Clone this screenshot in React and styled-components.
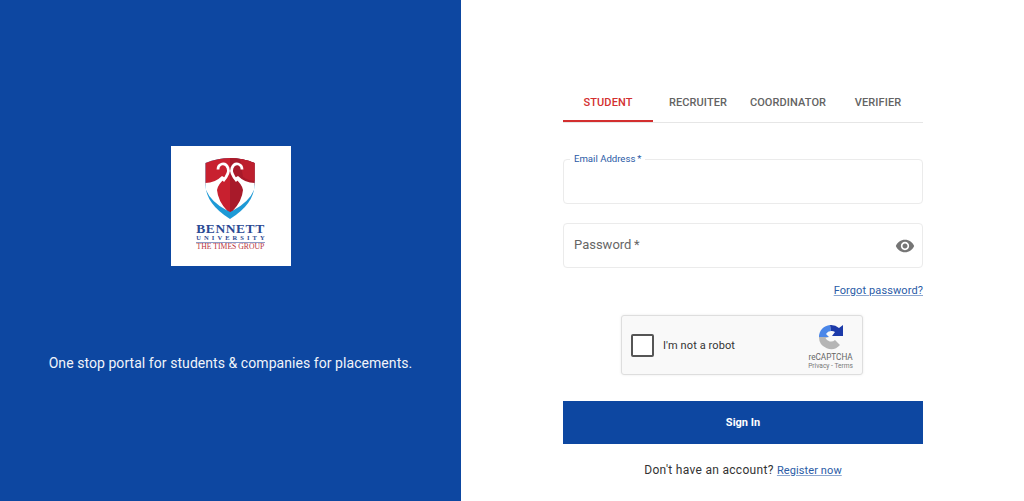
import React from "react";
import styled, { createGlobalStyle } from "styled-components";

const Global = createGlobalStyle`
  html, body { margin: 0; padding: 0; background: #fff; }
  body { font-family: Roboto, "Liberation Sans", sans-serif; }
  * { box-sizing: border-box; }
`;
const Page = styled.div`
  display: flex;
  width: 1024px;
  height: 501px;
  overflow: hidden;
`;
const Brand = styled.aside`
  width: 461px;
  background: #0d47a1;
  display: flex;
  flex-direction: column;
  align-items: center;
  padding-top: 146px;
`;
const LogoCard = styled.div`
  width: 120px;
  height: 120px;
  background: #fff;
  display: flex;
  flex-direction: column;
  align-items: center;
  padding-top: 11px;
`;
const Crest = styled.svg`
  width: 50px;
  height: 63px;
  margin-left: -2px;
  display: block;
`;
const LogoTitle = styled.div`
  font-family: "Liberation Serif", serif;
  font-weight: 700;
  font-size: 13.5px;
  line-height: 12px;
  letter-spacing: 0.55px;
  color: #2b4a94;
  margin-top: 3px;
  white-space: nowrap;
`;
const LogoSub = styled.div`
  font-family: "Liberation Serif", serif;
  font-weight: 700;
  font-size: 6.5px;
  line-height: 6px;
  letter-spacing: 3.05px;
  margin-right: -3px;
  color: #2b4a94;
  white-space: nowrap;
`;
const LogoRule = styled.div`
  width: 69px;
  height: 1px;
  background: #8d9cc6;
  margin-top: 1px;
`;
const LogoGroup = styled.div`
  font-family: "Liberation Serif", serif;
  font-weight: 400;
  font-size: 7.7px;
  line-height: 8px;
  color: #b8323c;
  white-space: nowrap;
`;
const Tagline = styled.p`
  margin: 88px 0 0;
  font-size: 14px;
  line-height: 18px;
  letter-spacing: 0.06px;
  color: #f1f4fa;
  white-space: nowrap;
`;
const Main = styled.main`
  flex: 1;
  display: flex;
  justify-content: center;
  padding-top: 84px;
  padding-left: 1px;
`;
const Column = styled.div`
  width: 360px;
  display: flex;
  flex-direction: column;
`;
const Tabs = styled.div`
  display: grid;
  grid-template-columns: repeat(4, 90px);
  height: 39px;
  border-bottom: 1px solid #e6e6e6;
`;
const Tab = styled.div`
  display: flex;
  align-items: center;
  justify-content: center;
  height: 38px;
  font-size: 11px;
  font-weight: 500;
  letter-spacing: 0.1px;
  color: ${(p) => (p.$active ? "#d32f2f" : "#636363")};
  border-bottom: 2px solid ${(p) => (p.$active ? "#d32f2f" : "transparent")};
`;
const Field = styled.div`
  position: relative;
  height: 45px;
  margin-top: ${(p) => p.$top}px;
  border: 1px solid #ebebeb;
  border-radius: 4px;
  display: flex;
  align-items: center;
  justify-content: space-between;
  padding: 0 7px 0 10px;
`;
const FloatLabel = styled.label`
  position: absolute;
  left: 6px;
  top: -7px;
  padding: 0 4px;
  background: #fff;
  font-size: 9.6px;
  line-height: 12px;
  color: #2a5ba6;
`;
const Placeholder = styled.span`
  font-size: 13px;
  line-height: 15px;
  margin-top: -2px;
  color: #666;
`;
const EyeIcon = styled.svg`
  width: 20px;
  height: 20px;
  fill: #757575;
  display: block;
`;
const LinkRow = styled.div`
  display: flex;
  justify-content: flex-end;
  margin-top: 16px;
  height: 14px;
`;
const TextLink = styled.a`
  font-size: 11px;
  line-height: 14px;
  letter-spacing: 0.1px;
  color: #2a5ba6;
  text-decoration: underline;
  text-decoration-color: #8ba6d0;
  text-underline-offset: 1px;
`;
const Captcha = styled.div`
  width: 242px;
  height: 60px;
  margin: 17px 0 0 58px;
  background: #f9f9f9;
  border: 1px solid #dedede;
  border-radius: 3px;
  box-shadow: 0 0 3px rgba(0, 0, 0, 0.08);
  display: flex;
  align-items: center;
  padding: 0 9px;
`;
const CheckBox = styled.div`
  width: 23px;
  height: 23px;
  border: 2px solid #555;
  border-radius: 2px;
  background: #fff;
`;
const CaptchaLabel = styled.span`
  margin-left: 9px;
  flex: 1;
  font-size: 11px;
  letter-spacing: 0.1px;
  color: #333;
`;
const CaptchaBrand = styled.div`
  display: flex;
  flex-direction: column;
  align-items: center;
  padding-top: 4px;
`;
const CaptchaIcon = styled.svg`
  width: 26px;
  height: 26px;
  display: block;
`;
const CaptchaName = styled.span`
  font-size: 8.2px;
  line-height: 10px;
  margin-top: 2px;
  color: #666;
`;
const CaptchaTerms = styled.span`
  font-size: 6.6px;
  line-height: 9px;
  color: #777;
`;
const SignIn = styled.button`
  height: 43px;
  margin-top: 26px;
  border: 0;
  background: #0d47a1;
  color: #fff;
  font-family: inherit;
  font-size: 11px;
  font-weight: 700;
`;
const Footer = styled.p`
  margin: 18px 0 0;
  text-align: center;
  font-size: 12px;
  line-height: 16px;
  letter-spacing: 0.3px;
  color: #333;
`;

export default function App() {
  return (
    <Page>
      <Global />
      <Brand>
        <LogoCard>
          <Crest viewBox="0 0 50 63">
            <path d="M0.5 6 Q13 1 25 1 Q37 1 49.500 6 V28 Q49 47 25 62 Q1 47 0.5 28Z" fill="#1e9ad6" />
            <path d="M0.5 6 Q13 1 25 1 Q37 1 49.500 6 V25 Q49 42 25 55 Q1 42 0.5 25Z" fill="#c8202f" />
            <path d="M25 1 Q37 1 49.500 6 V25 Q49 42 25 55Z" fill="#a81a2a" />
            <path d="M35 1.800 Q43 3 49.500 6 V24 Q44 24 38 20Z" fill="#bd1f2e" />
            <path d="M0.5 26 Q10 26 17 19 L20.500 21 Q13 27 12 33 Q13 44 22 53.500 Q6 45 1 33Z" fill="#fff" />
            <path d="M49.500 26 Q40 26 33 19 L29.500 21 Q37 27 38 33 Q37 44 28 53.500 Q44 45 49 33Z" fill="#fff" />
            <path d="M18 24 Q25 16 23 11 Q21 6 17 7 Q13 8 13 12.500 M32 24 Q25 16 27 11 Q29 6 33 7 Q37 8 37 12.500" fill="none" stroke="#fff" strokeWidth="2.800" />
          </Crest>
          <LogoTitle>BENNETT</LogoTitle>
          <LogoSub>UNIVERSITY</LogoSub>
          <LogoRule />
          <LogoGroup>THE TIMES GROUP</LogoGroup>
        </LogoCard>
        <Tagline>One stop portal for students &amp; companies for placements.</Tagline>
      </Brand>
      <Main>
        <Column>
          <Tabs>
            <Tab $active>STUDENT</Tab>
            <Tab>RECRUITER</Tab>
            <Tab>COORDINATOR</Tab>
            <Tab>VERIFIER</Tab>
          </Tabs>
          <Field $top={36}>
            <FloatLabel>Email Address{"\u2009"}*</FloatLabel>
          </Field>
          <Field $top={19}>
            <Placeholder>Password{"\u2009"}*</Placeholder>
            <EyeIcon viewBox="0 0 24 24">
              <path d="M12 4.5C7 4.5 2.73 7.61 1 12c1.73 4.39 6 7.5 11 7.5s9.27-3.11 11-7.5c-1.73-4.39-6-7.5-11-7.5zM12 17c-2.76 0-5-2.24-5-5s2.24-5 5-5 5 2.24 5 5-2.24 5-5 5zm0-8c-1.66 0-3 1.34-3 3s1.34 3 3 3 3-1.34 3-3-1.34-3-3-3z" />
            </EyeIcon>
          </Field>
          <LinkRow>
            <TextLink>Forgot password?</TextLink>
          </LinkRow>
          <Captcha>
            <CheckBox />
            <CaptchaLabel>I'm not a robot</CaptchaLabel>
            <CaptchaBrand>
              <CaptchaIcon viewBox="0 0 26 26">
                <path d="M1 13 A12 12 0 0 0 22 21 L17 16 A6 6 0 0 1 7.500 14 L11 13 L1 13Z" fill="#b5b5b5" />
                <path d="M1 13 A12 12 0 0 1 12 1 L13 7 A6 6 0 0 0 8 10 L11 13Z" fill="#4a86e8" />
                <path d="M12 1 A12 12 0 0 1 21 4 L25 1 V12 H14 L17 8 A6 6 0 0 0 13 7Z" fill="#1c3aa9" />
              </CaptchaIcon>
              <CaptchaName>reCAPTCHA</CaptchaName>
              <CaptchaTerms>Privacy - Terms</CaptchaTerms>
            </CaptchaBrand>
          </Captcha>
          <SignIn>Sign In</SignIn>
          <Footer>
            Don't have an account? <TextLink>Register now</TextLink>
          </Footer>
        </Column>
      </Main>
    </Page>
  );
}
